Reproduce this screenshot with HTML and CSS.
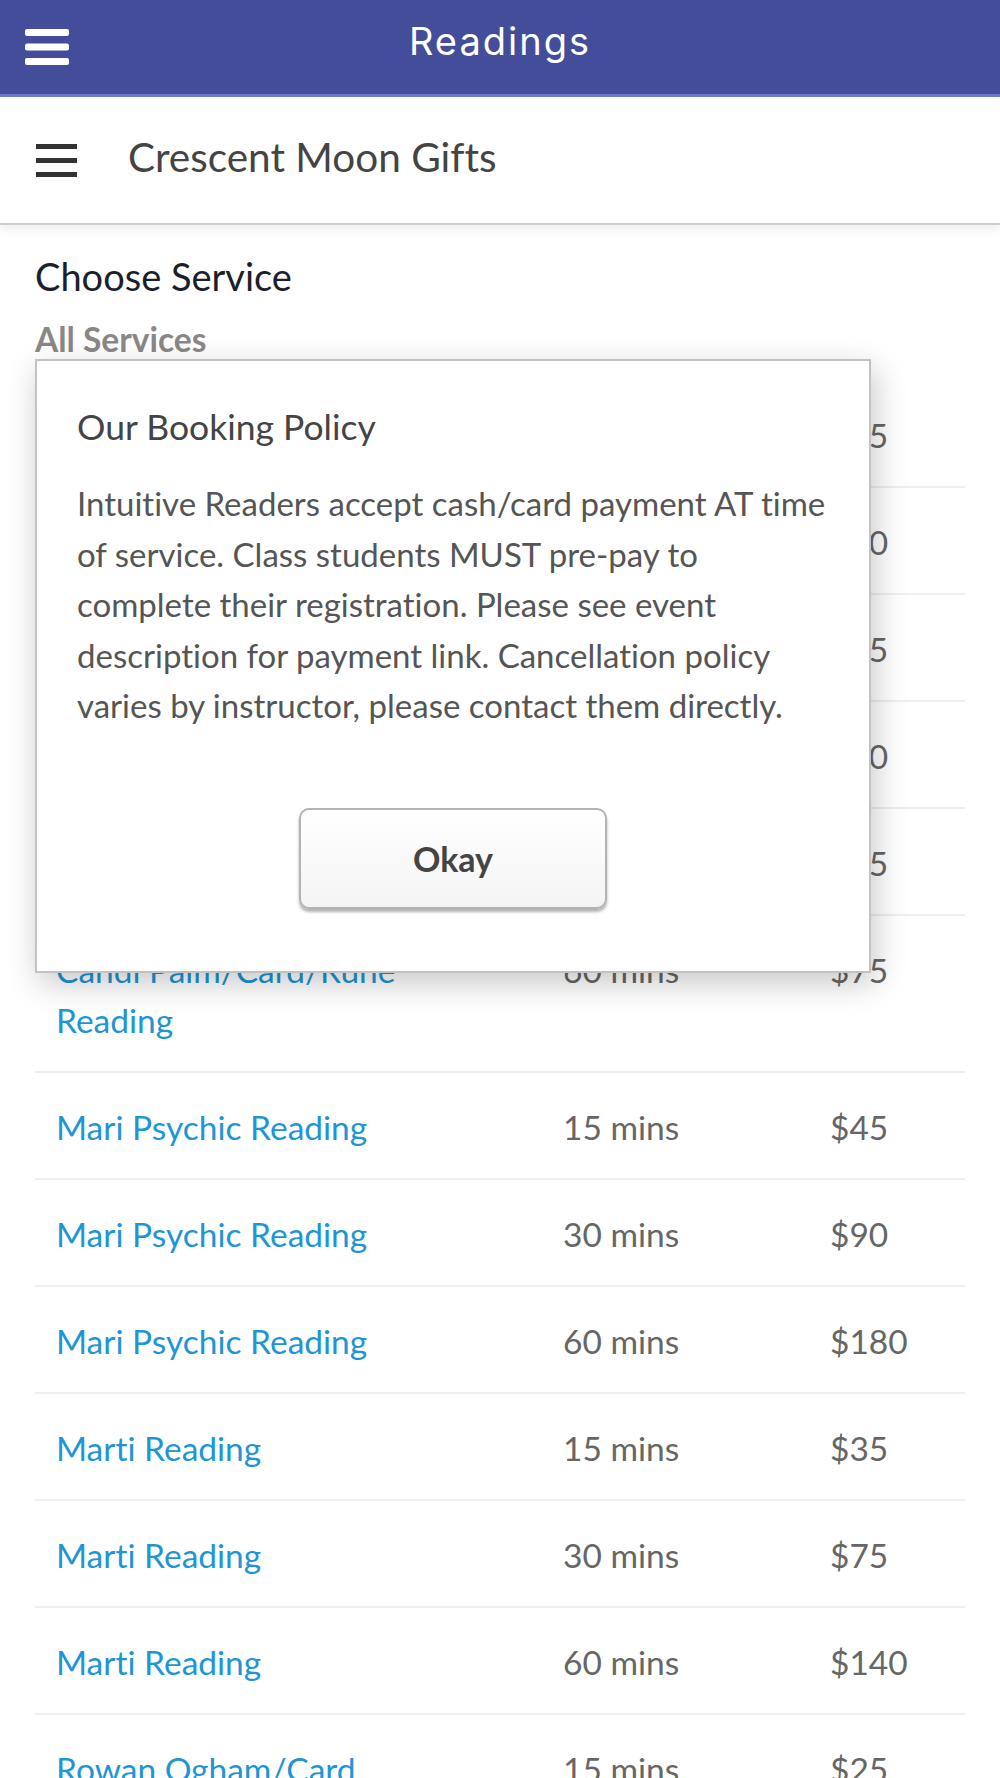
FILE: index.html
```html
<!DOCTYPE html>
<html lang="en">
<head>
  <meta charset="UTF-8" />
  <title>Readings</title>
  <link rel="stylesheet" href="styles.css">
</head>
<body>
  <header class="app-bar">
    <span class="app-menu">
      <svg width="44" height="37" viewBox="0 0 44 37">
        <rect x="0" y="0" width="44" height="7" rx="2" fill="#fff"/>
        <rect x="0" y="14.5" width="44" height="7" rx="2" fill="#fff"/>
        <rect x="0" y="29" width="44" height="7" rx="2" fill="#fff"/>
      </svg>
    </span>
    <h1 class="app-title">Readings</h1>
  </header>

  <div class="site-bar">
    <span class="site-menu">
      <svg width="41" height="33" viewBox="0 0 41 33">
        <rect x="0" y="0" width="41" height="5" fill="#333"/>
        <rect x="0" y="14" width="41" height="5" fill="#333"/>
        <rect x="0" y="28" width="41" height="5" fill="#333"/>
      </svg>
    </span>
    <span class="site-name">Crescent Moon Gifts</span>
  </div>

  <main class="page">
    <h2 class="page-title">Choose Service</h2>
    <div class="tab">All Services</div>

    <table class="services">
      <colgroup>
        <col class="col-name">
        <col class="col-time">
        <col class="col-price">
      </colgroup>
      <tbody id="serviceRows"></tbody>
    </table>

    <div class="policy">
      <h3>Our Booking Policy</h3>
      <p>Intuitive Readers accept cash/card payment AT time of service. Class students MUST pre-pay to complete their registration. Please see event description for payment link. Cancellation policy varies by instructor, please contact them directly.</p>
      <div class="policy-actions">
        <button class="okay-button" onclick="this.closest('.policy').remove()">Okay</button>
      </div>
    </div>
  </main>

  <script>
    const services = [
      ['Angela Tarot Reading', '15 mins', '$25'],
      ['Angela Tarot Reading', '30 mins', '$40'],
      ['Angela Tarot Reading', '60 mins', '$75'],
      ['Bri Reiki Session', '30 mins', '$50'],
      ['Bri Reiki Session', '60 mins', '$85'],
      ['Candi Palm/Card/Rune Reading', '60 mins', '$75'],
      ['Mari Psychic Reading', '15 mins', '$45'],
      ['Mari Psychic Reading', '30 mins', '$90'],
      ['Mari Psychic Reading', '60 mins', '$180'],
      ['Marti Reading', '15 mins', '$35'],
      ['Marti Reading', '30 mins', '$75'],
      ['Marti Reading', '60 mins', '$140'],
      ['Rowan Ogham/Card Reading', '15 mins', '$25']
    ];

    const rows = document.getElementById('serviceRows');
    services.forEach(([name, time, price]) => {
      const tr = document.createElement('tr');
      tr.innerHTML = `<td><a href="#">${name}</a></td><td>${time}</td><td>${price}</td>`;
      rows.appendChild(tr);
    });
  </script>
</body>
</html>
```

FILE: styles.css
```css
body {
  margin: 0;
  font-family: Lato, "Open Sans", sans-serif;
  font-variant-ligatures: no-common-ligatures;
  background: #fff;
  color: #333;
}

.app-bar {
  display: flex;
  align-items: center;
  justify-content: center;
  position: relative;
  height: 94px;
  background-color: #434d9a;
  border-bottom: 3px solid #6a79cc;
}

.app-menu {
  position: absolute;
  left: 25px;
  top: 29px;
  line-height: 0;
}

.app-title {
  margin: 0 0 12px;
  font-family: Inter, "Open Sans", sans-serif;
  font-weight: 400;
  font-size: 38px;
  letter-spacing: 2px;
  color: #fff;
}

.site-bar {
  display: flex;
  align-items: center;
  height: 126px;
  padding-left: 36px;
  border-bottom: 2px solid #cdcdcd;
  box-shadow: 0 4px 10px rgba(0, 0, 0, 0.08);
}

.site-menu {
  line-height: 0;
  margin-right: 51px;
}

.site-name {
  margin-bottom: 8px;
  font-size: 40.5px;
  color: #444;
}

.page {
  position: relative;
  padding: 28px 35px 0;
}

.page-title {
  margin: 0;
  font-size: 38px;
  font-weight: 400;
  line-height: 46px;
  color: #1c1e2b;
}

.tab {
  margin-top: 20px;
  padding-bottom: 22px;
  font-size: 33.5px;
  font-weight: 700;
  line-height: 40px;
  color: #8b8787;
}

.services {
  width: 930px;
  table-layout: fixed;
  border-collapse: collapse;
}

.col-name { width: 508px; }
.col-time { width: 267px; }
.col-price { width: 155px; }

.services tr {
  border-bottom: 2px solid #efefef;
}

.services td {
  vertical-align: top;
  padding: 29px 0 26px 20px;
  font-size: 33.5px;
  line-height: 50px;
  color: #666;
}

.services td:first-child {
  padding-left: 21px;
  padding-right: 80px;
}

.services a {
  color: #1e95d4;
  text-decoration: none;
}

.policy {
  position: absolute;
  left: 35px;
  top: 134px;
  width: 836px;
  height: 614px;
  box-sizing: border-box;
  padding: 44px 30px 0 40px;
  background: #fff;
  border: 2px solid #c2c2c2;
  box-shadow: 4px 10px 30px rgba(0, 0, 0, 0.22);
}

.policy h3 {
  margin: 0;
  font-size: 35.5px;
  font-weight: 400;
  line-height: 43px;
  color: #444;
}

.policy p {
  margin: 30px 0 0;
  font-size: 33px;
  line-height: 50.5px;
  color: #555;
}

.policy-actions {
  display: flex;
  justify-content: center;
  margin-top: 77px;
  padding-right: 10px;
}

.okay-button {
  width: 308px;
  height: 101px;
  font-family: Lato, sans-serif;
  font-size: 34px;
  font-weight: 700;
  color: #444;
  background: linear-gradient(#ffffff, #f4f4f4);
  border: 2px solid #b3b3b3;
  border-radius: 10px;
  box-shadow: 0 3px 3px rgba(0, 0, 0, 0.3);
  cursor: pointer;
}
```
